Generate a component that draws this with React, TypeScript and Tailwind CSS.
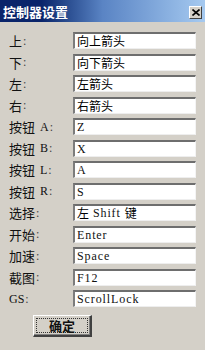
import React from "react";

type Row = { label: string; key?: string; value: Array<[string, boolean]> };

const rows: Row[] = [
  { label: "上", value: [["向上箭头", true]] },
  { label: "下", value: [["向下箭头", true]] },
  { label: "左", value: [["左箭头", true]] },
  { label: "右", value: [["右箭头", true]] },
  { label: "按钮", key: "A", value: [["Z", false]] },
  { label: "按钮", key: "B", value: [["X", false]] },
  { label: "按钮", key: "L", value: [["A", false]] },
  { label: "按钮", key: "R", value: [["S", false]] },
  { label: "选择", value: [["左", true], [" Shift ", false], ["键", true]] },
  { label: "开始", value: [["Enter", false]] },
  { label: "加速", value: [["Space", false]] },
  { label: "截图", value: [["F12", false]] },
  { label: "", key: "GS", value: [["ScrollLock", false]] },
];

const cjk = "font-['Noto_Sans_CJK_SC',sans-serif]";
const latin = "font-['Liberation_Serif','Noto_Sans_CJK_SC',serif]";

function Field({ parts }: { parts: Array<[string, boolean]> }) {
  return (
    <div className="ml-auto mr-[9px] flex h-[17px] w-[123px] items-center overflow-hidden whitespace-pre border-t-2 border-l-2 border-t-[#6e6e6e] border-l-[#7c7c7c] border-r border-b border-r-[#f4f4f4] border-b-[#eeeeee] bg-white pl-[2px] text-black">
      {parts.map(([text, isCjk], i) =>
        isCjk ? (
          <span key={i} className={`${cjk} text-[12px] leading-none`}>
            {text}
          </span>
        ) : (
          <span key={i} className={`${latin} text-[12px] leading-none tracking-[0.9px] text-[#111]`}>
            {text}
          </span>
        )
      )}
    </div>
  );
}

export default function App() {
  return (
    <div className="flex h-[350px] w-[205px] flex-col overflow-hidden bg-[#d4d0c8] select-none">
      <div className="flex h-[22px] shrink-0 items-center bg-gradient-to-r from-[#0a246a] from-20% via-[#5a84c4] to-[#a6caf0] pl-[3px] pr-[3px]">
        <span className={`${cjk} text-[13px] font-bold leading-none text-white`}>
          控制器设置
        </span>
        <div className="ml-auto mt-[3px] flex h-[13px] w-[13px] items-center justify-center border border-t-white border-l-white border-r-[#404040] border-b-[#404040] bg-[#d4d0c8]">
          <svg width="8" height="7" viewBox="0 0 8 7">
            <path d="M0.5 0.5 L7.5 6.5 M7.5 0.5 L0.5 6.5" stroke="#000" strokeWidth="1.6" />
          </svg>
        </div>
      </div>

      <div className="flex flex-col pt-[10px]">
        {rows.map((r, i) => (
          <div key={i} className="flex h-[21.5px] items-start">
            <div className="flex h-[17px] items-center pl-[9px] text-[#111]">
              {r.label && (
                <span className={`${cjk} text-[13px] leading-none`}>{r.label}</span>
              )}
              {r.key && (
                <span className={`${latin} ${r.label ? "ml-[5px]" : ""} text-[12px] leading-none`}>
                  {r.key}
                </span>
              )}
              <span className={`${latin} ml-[1px] text-[12px] leading-none text-[#444]`}>:</span>
            </div>
            <Field parts={r.value} />
          </div>
        ))}
      </div>

      <div className="mt-[3px] flex">
        <div className="ml-[33px] flex h-[22px] w-[59px] items-center justify-center border-t border-l border-r-2 border-b-2 border-t-white border-l-white border-r-[#404040] border-b-[#404040] bg-[#d4d0c8] p-[2px] shadow-[inset_-1px_-1px_0_#808080]">
          <div className="flex h-full w-full items-center justify-center border border-dotted border-[#333]">
            <span className={`${cjk} text-[13px] font-bold leading-none text-[#111]`}>确定</span>
          </div>
        </div>
      </div>
    </div>
  );
}
